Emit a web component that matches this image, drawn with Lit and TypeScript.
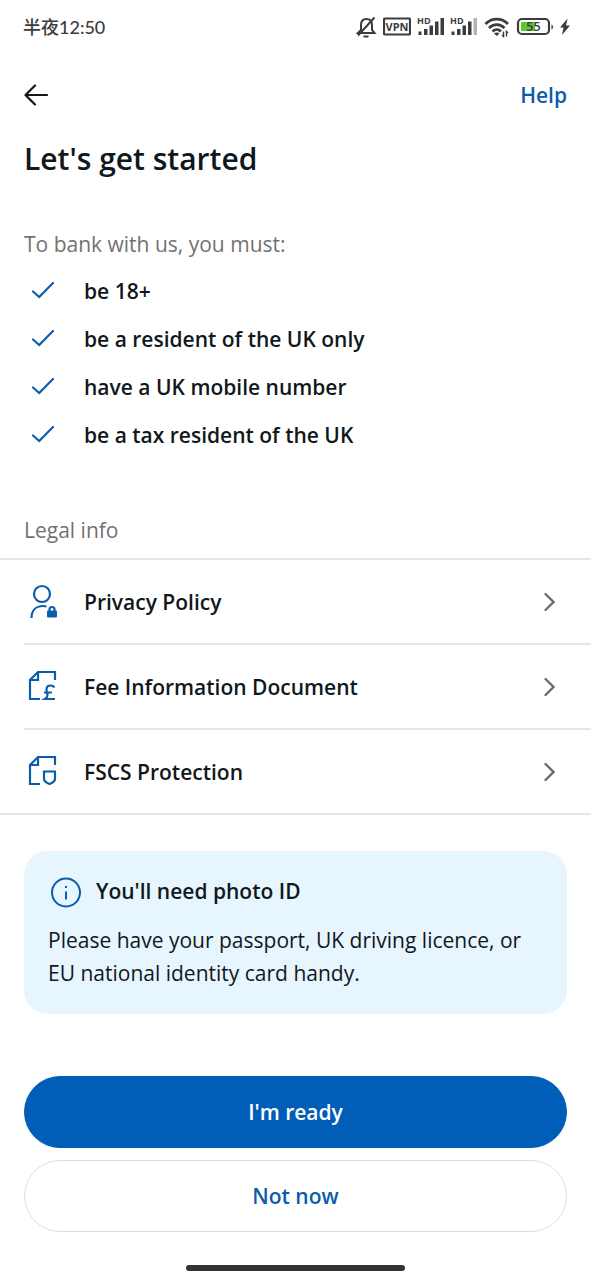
import { LitElement, html, css, svg } from "lit";
import { customElement } from "lit/decorators.js";

const requirements = [
  "be 18+",
  "be a resident of the UK only",
  "have a UK mobile number",
  "be a tax resident of the UK",
];

const page = svg`<path d="M31 11V3H14L6 11V30H16"/><path d="M14 3V11H6"/>`;

const legalLinks = [
  {
    label: "Privacy Policy",
    icon: svg`<circle cx="18" cy="10" r="8"/><path d="M7.500 34c0-7.500 4.500-12 11.500-12 1.500 0 2.500.200 3.500.600"/>
      <path d="M25.500 27v-1.500a2.500 2.500 0 0 1 5 0v1.500"/><rect x="23" y="26.500" width="10" height="7" rx="1" fill="currentColor" stroke="none"/>`,
  },
  {
    label: "Fee Information Document",
    icon: svg`${page}<path d="M30.500 18.500c-1-1.500-2.500-2-4-2-2.500 0-4 1.800-4 4.300 0 2.500 1 3.500 1 5.200 0 1.600-.8 3-2.500 4H31M20 23.500h8"/>`,
  },
  {
    label: "FSCS Protection",
    icon: svg`${page}<path d="M20 17.500h11v7c0 3-2.500 4.500-5.500 5.500-3-1-5.500-2.500-5.500-5.500z"/>`,
  },
];

@customElement("status-bar")
class StatusBar extends LitElement {
  static styles = css`
    :host {
      display: flex;
      align-items: center;
      justify-content: space-between;
      height: 54px;
      padding: 0 21px 0 23px;
      color: #3c3c3c;
      font: 500 18px/24px Lato, "Noto Sans CJK SC", sans-serif;
    }
    .icons {
      display: flex;
      align-items: center;
      gap: 6px;
    }
    .pair {
      display: flex;
      gap: 5px;
    }
    svg {
      display: block;
      fill: none;
      stroke: currentColor;
    }
    text {
      stroke: none;
      fill: currentColor;
      font-family: "Open Sans", sans-serif;
    }
    .solid {
      fill: currentColor;
      stroke: none;
    }
    .faded {
      fill: #b4b4b4;
      stroke: none;
    }
    .charge {
      fill: #5ac82d;
      stroke: none;
    }
  `;

  private signal(weak: boolean) {
    return html`<svg width="28" height="28" viewBox="0 0 28 28">
      <text x="0" y="11" font-size="9" font-weight="700">HD</text>
      <path class="solid" d="M1.500 18.500h3v3.500h-3zM7 16h3.500v6h-3.500zM12.500 12.500h3.500v9.500h-3.500zM18 8.500h3.500v13.500h-3.500z" />
      <path class=${weak ? "faded" : "solid"} d="M23.500 5h3.500v17h-3.500z" />
    </svg>`;
  }

  render() {
    return html`
      <span>半夜12:50</span>
      <div class="icons">
        <svg width="21" height="22" viewBox="0 0 21 22" stroke-width="2">
          <path d="M2 17H18.500L16 14V9c0-4-2-6-5.500-6S5 5 5 9v5z" />
          <path d="M2 19.500L18.500 1.500M7.500 20.500h5" />
        </svg>
        <svg width="28" height="20" viewBox="0 0 28 20" stroke-width="2.200">
          <rect x="1" y="1.500" width="26" height="16" rx="1" />
          <text x="14" y="13.500" font-size="11" font-weight="700" text-anchor="middle">VPN</text>
        </svg>
        <div class="pair">${this.signal(false)}${this.signal(true)}</div>
        <svg width="26" height="22" viewBox="0 0 26 22" stroke-width="2.800">
          <path d="M1.500 8C8 1.500 17.500 1.500 24 8M5 12c4.500-4.500 11-4.500 15.500 0M8.500 15.500c2.500-2.500 6-2.500 8.500 0" />
          <path class="solid" d="M10 17.500c1.500-1.500 4-1.500 5.500 0L12.800 20z" />
          <path d="M19.500 15.500v5l-1.500-1.500M22.500 20.500v-5l1.500 1.500" stroke-width="1.400" />
        </svg>
        <svg width="38" height="20" viewBox="0 0 38 20" stroke-width="2.200">
          <rect x="2" y="2" width="31" height="15" rx="4" />
          <rect class="charge" x="5" y="5" width="14" height="9" rx="1" />
          <path class="solid" d="M35.500 7.500c2 .5 2 4.500 0 5z" />
          <text x="17.500" y="14" font-size="12.500" font-weight="600" text-anchor="middle">55</text>
        </svg>
        <svg width="10" height="18" viewBox="0 0 10 18">
          <path class="solid" d="M7.500 .5L0 9.500h3.500L2 17 10 7.500H6z" />
        </svg>
      </div>
    `;
  }
}

@customElement("app-root")
class AppRoot extends LitElement {
  static styles = css`
    :host {
      display: flex;
      flex-direction: column;
      min-height: 100vh;
      box-sizing: border-box;
      background: #fff;
      color: #11181c;
      font: 400 21px/32px "Open Sans", "Noto Sans CJK SC", sans-serif;
    }
    * {
      box-sizing: border-box;
    }
    svg {
      display: block;
      flex: none;
      fill: none;
      stroke: currentColor;
    }
    h1,
    h2,
    p,
    ul {
      margin: 0;
      padding: 0;
      font: inherit;
      list-style: none;
    }
    button {
      font: inherit;
      cursor: pointer;
    }
    a {
      color: inherit;
      text-decoration: none;
    }
    .header {
      display: flex;
      align-items: center;
      justify-content: space-between;
      height: 82px;
      padding: 0 24px;
    }
    .back {
      padding: 0;
      border: 0;
      background: none;
      color: inherit;
    }
    .header .help {
      color: #0b5cab;
      font-weight: 600;
    }
    .title {
      padding: 0 24px;
      font-size: 30px;
      line-height: 46px;
      font-weight: 600;
    }
    .label {
      padding: 0 24px;
      color: #727272;
    }
    .needs {
      margin: 46px 0 7px;
    }
    .legal {
      margin: 55px 0 12px;
    }
    .checks {
      padding: 0 24px;
      font-weight: 600;
    }
    .check {
      display: flex;
      align-items: center;
      gap: 24px;
      height: 48px;
    }
    .check svg,
    .links svg.icon {
      color: #0b5cab;
    }
    .links {
      border-top: 2px solid #e6e6e6;
      border-bottom: 2px solid #e6e6e6;
      font-weight: 600;
    }
    .link {
      display: flex;
      align-items: center;
      gap: 24px;
      height: 83px;
      margin-left: 24px;
      padding-right: 36px;
    }
    li + li .link {
      border-top: 2px solid #e6e6e6;
      height: 85px;
    }
    .name {
      flex: 1;
    }
    .chevron {
      color: #6a6a6a;
    }
    .card {
      margin: 36px 24px 0;
      padding: 24px;
      border-radius: 24px;
      background: #e7f5fe;
      line-height: 33px;
    }
    .card-title {
      display: flex;
      align-items: center;
      gap: 12px;
      margin-bottom: 16px;
      font-weight: 600;
    }
    .card-title svg {
      color: #0b5cab;
    }
    .actions {
      display: flex;
      flex-direction: column;
      gap: 12px;
      margin-top: auto;
      padding: 32px 24px 33px;
    }
    .action {
      height: 72px;
      border: 1px solid #dedede;
      border-radius: 36px;
      background: #fff;
      color: #0b5cab;
      font-weight: 600;
    }
    .primary {
      border-color: #005eb8;
      background: #005eb8;
      color: #fff;
    }
    .home {
      width: 37%;
      height: 6px;
      margin: 0 auto 9px;
      border-radius: 3px;
      background: #333;
    }
  `;

  render() {
    return html`
      <status-bar></status-bar>
      <header class="header">
        <button class="back" aria-label="Back">
          <svg width="24" height="24" viewBox="0 0 24 24" stroke-width="2.200" stroke-linecap="round" stroke-linejoin="round">
            <path d="M11 2.500L1.500 12L11 21.500M2 12H23" />
          </svg>
        </button>
        <a class="help" href="#help">Help</a>
      </header>
      <h1 class="title">Let's get started</h1>
      <p class="label needs">To bank with us, you must:</p>
      <ul class="checks">
        ${requirements.map(
          (text) => html`<li class="check">
            <svg width="36" height="36" viewBox="0 0 36 36" stroke-width="2.200" stroke-linecap="round">
              <path d="M9 18.500L15.200 24L29 10" />
            </svg>
            <span>${text}</span>
          </li>`
        )}
      </ul>
      <h2 class="label legal">Legal info</h2>
      <ul class="links">
        ${legalLinks.map(
          ({ label, icon }) => html`<li>
            <a class="link" href="#legal">
              <svg class="icon" width="36" height="36" viewBox="0 0 36 36" stroke-width="2.200">${icon}</svg>
              <span class="name">${label}</span>
              <svg class="chevron" width="12" height="20" viewBox="0 0 12 20" stroke-width="2.300" stroke-linecap="round">
                <path d="M2.500 2L10.500 10L2.500 18" />
              </svg>
            </a>
          </li>`
        )}
      </ul>
      <section class="card">
        <h2 class="card-title">
          <svg width="36" height="32" viewBox="0 0 36 32" stroke-width="2">
            <circle cx="18" cy="16.500" r="14" />
            <path d="M18 15.500v8M18 10v2" />
          </svg>
          You'll need photo ID
        </h2>
        <p>Please have your passport, UK driving licence, or EU national identity card handy.</p>
      </section>
      <div class="actions">
        <button class="action primary">I'm ready</button>
        <button class="action">Not now</button>
      </div>
      <div class="home"></div>
    `;
  }
}
